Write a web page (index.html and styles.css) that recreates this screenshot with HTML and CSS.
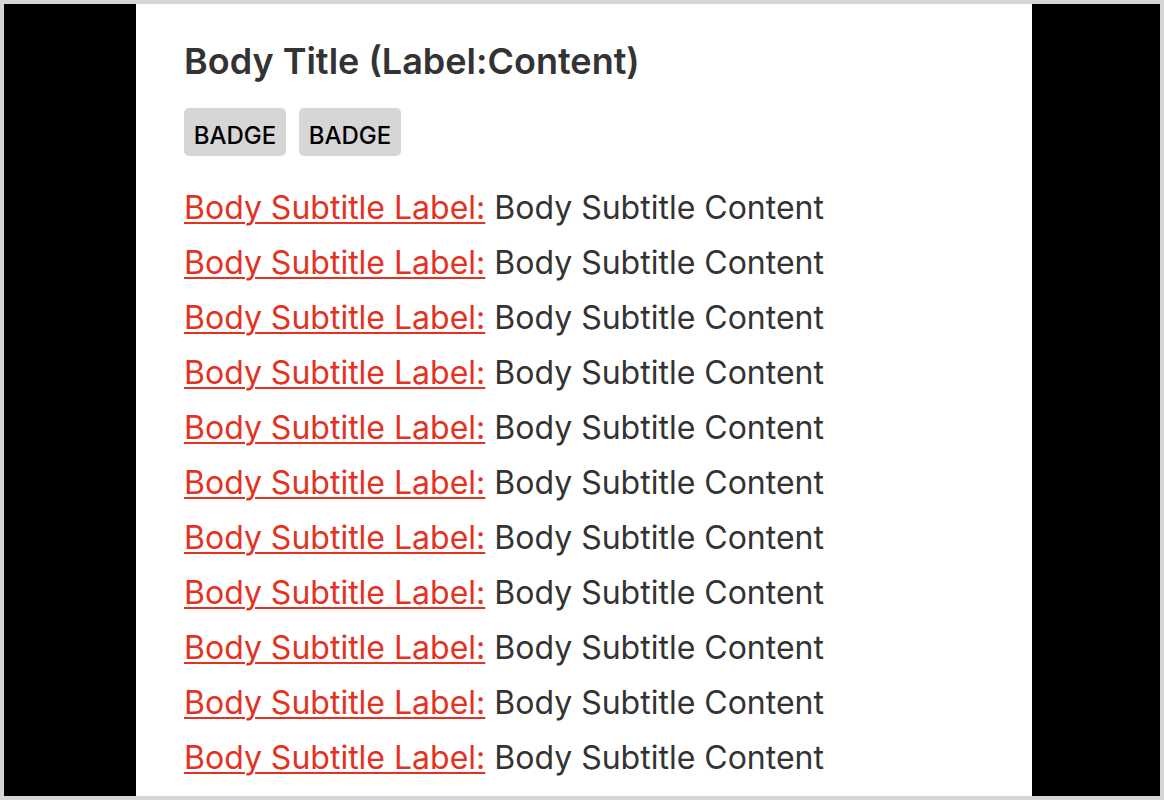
FILE: index.html
```html
<!DOCTYPE html>
<html>
<head>
<meta charset="utf-8">
<link rel="stylesheet" href="styles.css">
</head>
<body>
<div class="frame">
  <div class="panel">
    <h1 class="title">Body Title (Label:Content)</h1>
    <div class="badges">
      <span class="badge">BADGE</span>
      <span class="badge">BADGE</span>
    </div>
    <div class="rows">
      <div class="row"><a class="label" href="#">Body Subtitle Label:</a> <span class="content">Body Subtitle Content</span></div>
      <div class="row"><a class="label" href="#">Body Subtitle Label:</a> <span class="content">Body Subtitle Content</span></div>
      <div class="row"><a class="label" href="#">Body Subtitle Label:</a> <span class="content">Body Subtitle Content</span></div>
      <div class="row"><a class="label" href="#">Body Subtitle Label:</a> <span class="content">Body Subtitle Content</span></div>
      <div class="row"><a class="label" href="#">Body Subtitle Label:</a> <span class="content">Body Subtitle Content</span></div>
      <div class="row"><a class="label" href="#">Body Subtitle Label:</a> <span class="content">Body Subtitle Content</span></div>
      <div class="row"><a class="label" href="#">Body Subtitle Label:</a> <span class="content">Body Subtitle Content</span></div>
      <div class="row"><a class="label" href="#">Body Subtitle Label:</a> <span class="content">Body Subtitle Content</span></div>
      <div class="row"><a class="label" href="#">Body Subtitle Label:</a> <span class="content">Body Subtitle Content</span></div>
      <div class="row"><a class="label" href="#">Body Subtitle Label:</a> <span class="content">Body Subtitle Content</span></div>
      <div class="row"><a class="label" href="#">Body Subtitle Label:</a> <span class="content">Body Subtitle Content</span></div>
    </div>
  </div>
</div>
</body>
</html>
```

FILE: styles.css
```css
html, body {
  margin: 0;
  padding: 0;
}
body {
  background: #d6d6d6;
  padding: 4px;
  height: 800px;
  box-sizing: border-box;
  overflow: hidden;
  font-family: Inter, "Liberation Sans", Arial, sans-serif;
}
.frame {
  background: #000;
  height: 792px;
  display: flex;
  padding-left: 132px;
  overflow: hidden;
}
.panel {
  background: #fff;
  width: 896px;
  flex: none;
  box-sizing: border-box;
  padding: 37px 48px 0;
  overflow: hidden;
}
.title {
  margin: 0;
  font-size: 36px;
  line-height: 40px;
  font-weight: 600;
  color: #333;
}
.badges {
  display: flex;
  gap: 13px;
  margin-top: 27px;
}
.badge {
  display: block;
  width: 102px;
  height: 48px;
  box-sizing: border-box;
  padding-top: 8px;
  background: #d6d6d6;
  border-radius: 5px;
  color: #000;
  font-size: 24px;
  font-weight: 500;
  line-height: 40px;
  text-align: center;
}
.rows {
  margin-top: 24px;
}
.row {
  font-size: 32px;
  line-height: 55px;
  white-space: nowrap;
}
.label {
  color: #e3321f;
  text-decoration: underline;
  text-decoration-thickness: 2px;
  text-underline-offset: 3px;
}
.content {
  color: #333;
}
```
